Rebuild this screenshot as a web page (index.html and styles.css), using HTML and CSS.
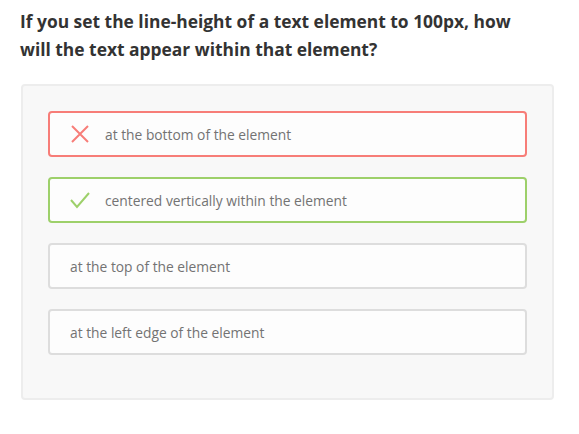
FILE: index.html
```html
<!DOCTYPE html>
<html>
<head>
<meta charset="utf-8">
<link rel="stylesheet" href="styles.css">
</head>
<body>
<h1 class="question">If you set the line-height of a text element to 100px, how will the text appear within that element?</h1>
<div class="panel">
  <div class="option wrong">
    <svg class="icon" width="20" height="20" viewBox="0 0 20 20"><path d="M2 2 L18 18 M18 2 L2 18" stroke="#f77d78" stroke-width="2" fill="none"/></svg>
    <span class="label">at the bottom of the element</span>
  </div>
  <div class="option right">
    <svg class="icon" width="20" height="20" viewBox="0 0 20 20"><path d="M1 10 L7 17 L19 3" stroke="#9dd06a" stroke-width="2" fill="none"/></svg>
    <span class="label">centered vertically within the element</span>
  </div>
  <div class="option">
    <span class="label">at the top of the element</span>
  </div>
  <div class="option">
    <span class="label">at the left edge of the element</span>
  </div>
</div>
</body>
</html>
```
FILE: styles.css
```css
html, body {
  margin: 0;
  padding: 0;
  background: #ffffff;
}
body {
  font-family: "Open Sans", Lato, sans-serif;
}
.question {
  margin: 7px 0 0 20px;
  width: 520px;
  font-size: 17.4px;
  line-height: 28px;
  font-weight: 700;
  color: #333333;
}
.panel {
  margin: 21px 0 0 21px;
  width: 533px;
  height: 316px;
  box-sizing: border-box;
  border: 2px solid #ededed;
  border-radius: 4px;
  background: #f8f8f8;
  padding: 25px 25px 0 25px;
  display: flex;
  flex-direction: column;
  gap: 20px;
}
.option {
  height: 46px;
  box-sizing: border-box;
  border: 2px solid #dddddd;
  border-radius: 4px;
  background: #fdfdfd;
  display: flex;
  align-items: center;
  padding: 0 20px;
  gap: 15px;
}
.option.wrong { border-color: #f77d78; }
.option.right { border-color: #9dd06a; }
.icon { flex: none; }
.label {
  font-size: 13.8px;
  color: #737373;
}
```
